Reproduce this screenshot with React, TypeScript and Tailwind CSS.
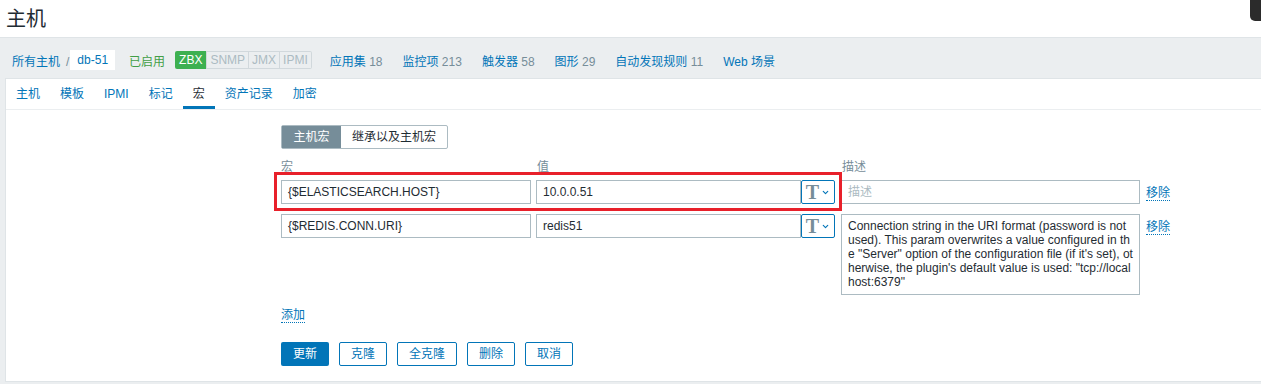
import { ChevronDown } from "lucide-react"

const font = "font-['Liberation_Sans','Noto_Sans_CJK_SC',sans-serif]"

function Counted({ label, count }: { label: string; count?: number }) {
  return (
    <a className="text-[#0275b8]">
      {label}
      {count !== undefined && <span className="text-[#768d99]"> {count}</span>}
    </a>
  )
}

function TypeButton() {
  return (
    <div className="flex h-[24px] w-[34px] shrink-0 items-center justify-center gap-[2px] rounded-[2px] border border-[#0275b8] bg-white">
      <span className="font-['Liberation_Serif',serif] text-[20px] font-bold leading-none text-[#768d99]">T</span>
      <ChevronDown className="h-[9px] w-[9px] text-[#0275b8]" strokeWidth={3} />
    </div>
  )
}

function RemoveLink() {
  return (
    <a className="mt-[6px] self-start border-b border-dotted border-[#0275b8] leading-[14px] text-[#0275b8]">移除</a>
  )
}

export default function App() {
  const tabs = ["主机", "模板", "IPMI", "标记", "宏", "资产记录", "加密"]
  const buttons = ["克隆", "全克隆", "删除", "取消"]

  return (
    <div className={`${font} relative h-[384px] overflow-hidden bg-[#ebeef0] text-[12px] text-[#1f2c33]`}>
      <div className="absolute right-0 top-0 h-[21px] w-[11px] rounded-bl-[5px] bg-[#2b2b2b]" />

      <header className="flex h-[38px] items-center border-b border-[#dfe4e7] bg-white pl-[6px]">
        <h1 className="text-[20px] font-normal leading-none text-[#1f2c33]">主机</h1>
      </header>

      <div className="flex h-[40px] items-start pl-[12px] pt-[12px]">
        <a className="mt-[3px] text-[#0275b8]">所有主机</a>
        <span className="ml-[6px] mt-[3px] text-[#768d99]">/</span>
        <span className="ml-[1px] flex h-[20px] items-center bg-white px-[7px] text-[#0275b8]">db-51</span>
        <span className="ml-[14px] mt-[3px] text-[#429e47]">已启用</span>
        <div className="ml-[10px] mt-[1px] flex h-[18px] text-[12px]">
          <span className="flex items-center rounded-l-[2px] bg-[#3db051] px-[4px] text-white">ZBX</span>
          <span className="flex items-center border border-[#d1d8dc] px-[3px] text-[#acbbc2]">SNMP</span>
          <span className="flex items-center border border-l-0 border-[#d1d8dc] px-[3px] text-[#acbbc2]">JMX</span>
          <span className="flex items-center rounded-r-[2px] border border-l-0 border-[#d1d8dc] px-[3px] text-[#acbbc2]">IPMI</span>
        </div>
        <div className="ml-[18px] mt-[3px] flex gap-[20px]">
          <Counted label="应用集" count={18} />
          <Counted label="监控项" count={213} />
          <Counted label="触发器" count={58} />
          <Counted label="图形" count={29} />
          <Counted label="自动发现规则" count={11} />
          <Counted label="Web 场景" />
        </div>
      </div>

      <div className="ml-[5px] border-b border-l border-t border-[#dfe4e7] bg-white">
        <nav className="flex h-[31px] border-b border-[#ebeef0]">
          {tabs.map((t) => (
            <a
              key={t}
              className={
                t === "宏"
                  ? "flex items-center border-b-[3px] border-[#0275b8] px-[10px] pt-[3px] text-[#1f2c33]"
                  : "flex items-center px-[10px] text-[#0275b8]"
              }
            >
              {t}
            </a>
          ))}
        </nav>

        <div className="pb-[15px] pl-[275px] pt-[15px]">
          <div className="flex h-[24px] w-fit rounded-[2px] border border-[#acbbc2]">
            <span className="flex w-[59px] items-center justify-center bg-[#768d99] text-white">主机宏</span>
            <span className="flex w-[106px] items-center justify-center text-[#1f2c33]">继承以及主机宏</span>
          </div>

          <div className="mt-[10px] flex h-[16px] items-center text-[#768d99]">
            <span className="w-[256px]">宏</span>
            <span className="w-[305px]">值</span>
            <span>描述</span>
          </div>

          <div className="relative mt-[5px] flex items-start">
            <div className="absolute left-[-7px] top-[-8px] h-[39px] w-[568px] border-[3px] border-[#e8202a]" />
            <div className="flex h-[24px] w-[250px] items-center border border-[#acbbc2] px-[6px]">{"{$ELASTICSEARCH.HOST}"}</div>
            <div className="ml-[5px] flex">
              <div className="flex h-[24px] w-[265px] items-center border border-[#acbbc2] px-[6px]">10.0.0.51</div>
              <TypeButton />
            </div>
            <div className="ml-[6px] flex h-[24px] w-[299px] items-center border border-[#acbbc2] px-[6px] text-[#acbbc2]">描述</div>
            <div className="ml-[6px] flex">
              <RemoveLink />
            </div>
          </div>

          <div className="mt-[10px] flex items-start">
            <div className="flex h-[24px] w-[250px] items-center border border-[#acbbc2] px-[6px]">{"{$REDIS.CONN.URI}"}</div>
            <div className="ml-[5px] flex">
              <div className="flex h-[24px] w-[265px] items-center border border-[#acbbc2] px-[6px]">redis51</div>
              <TypeButton />
            </div>
            <div className="ml-[6px] h-[81px] w-[299px] whitespace-pre-line border border-[#acbbc2] px-[6px] pt-[4px] leading-[14px]">
              {'Connection string in the URI format (password is not\nused). This param overwrites a value configured in th\ne "Server" option of the configuration file (if it\'s set), ot\nherwise, the plugin\'s default value is used: "tcp://local\nhost:6379"'}
            </div>
            <div className="ml-[6px] flex">
              <RemoveLink />
            </div>
          </div>

          <div className="mt-[12px] flex h-[16px] items-center">
            <a className="border-b border-dotted border-[#0275b8] leading-[14px] text-[#0275b8]">添加</a>
          </div>

          <div className="mt-[19px] flex gap-[10px]">
            <button className="h-[24px] w-[48px] rounded-[2px] bg-[#0275b8] text-white">更新</button>
            {buttons.map((b) => (
              <button
                key={b}
                className={`h-[24px] rounded-[2px] border border-[#0275b8] bg-white text-[#0275b8] ${b === "全克隆" ? "w-[60px]" : "w-[48px]"}`}
              >
                {b}
              </button>
            ))}
          </div>
        </div>
      </div>
    </div>
  )
}
